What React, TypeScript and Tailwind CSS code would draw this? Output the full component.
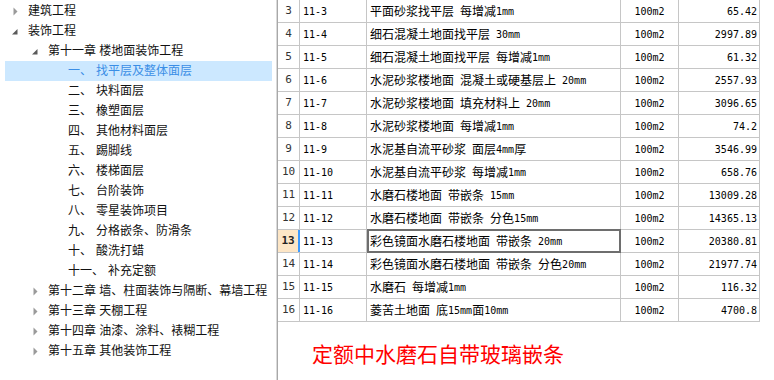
import React from 'react';

type TreeItem = {
    level: 0 | 1 | 2;
    state?: 'open' | 'closed';
    num?: string;
    label: string;
    selected?: boolean;
};

const TREE: TreeItem[] = [
    { level: 0, state: 'closed', label: '建筑工程' },
    { level: 0, state: 'open', label: '装饰工程' },
    { level: 1, state: 'open', label: '第十一章 楼地面装饰工程' },
    { level: 2, num: '一、', label: '找平层及整体面层', selected: true },
    { level: 2, num: '二、', label: '块料面层' },
    { level: 2, num: '三、', label: '橡塑面层' },
    { level: 2, num: '四、', label: '其他材料面层' },
    { level: 2, num: '五、', label: '踢脚线' },
    { level: 2, num: '六、', label: '楼梯面层' },
    { level: 2, num: '七、', label: '台阶装饰' },
    { level: 2, num: '八、', label: '零星装饰项目' },
    { level: 2, num: '九、', label: '分格嵌条、防滑条' },
    { level: 2, num: '十、', label: '酸洗打蜡' },
    { level: 2, num: '十一、', label: '补充定额' },
    { level: 1, state: 'closed', label: '第十二章 墙、柱面装饰与隔断、幕墙工程' },
    { level: 1, state: 'closed', label: '第十三章 天棚工程' },
    { level: 1, state: 'closed', label: '第十四章 油漆、涂料、裱糊工程' },
    { level: 1, state: 'closed', label: '第十五章 其他装饰工程' },
];

// row no, code, name, unit, value
const ROWS: [string, string, string, string, string][] = [
    ['3', '11-3', '平面砂浆找平层 每增减1mm', '100m2', '65.42'],
    ['4', '11-4', '细石混凝土地面找平层 30mm', '100m2', '2997.89'],
    ['5', '11-5', '细石混凝土地面找平层 每增减1mm', '100m2', '61.32'],
    ['6', '11-6', '水泥砂浆楼地面 混凝土或硬基层上 20mm', '100m2', '2557.93'],
    ['7', '11-7', '水泥砂浆楼地面 填充材料上 20mm', '100m2', '3096.65'],
    ['8', '11-8', '水泥砂浆楼地面 每增减1mm', '100m2', '74.2'],
    ['9', '11-9', '水泥基自流平砂浆 面层4mm厚', '100m2', '3546.99'],
    ['10', '11-10', '水泥基自流平砂浆 每增减1mm', '100m2', '658.76'],
    ['11', '11-11', '水磨石楼地面 带嵌条 15mm', '100m2', '13009.28'],
    ['12', '11-12', '水磨石楼地面 带嵌条 分色15mm', '100m2', '14365.13'],
    ['13', '11-13', '彩色镜面水磨石楼地面 带嵌条 20mm', '100m2', '20380.81'],
    ['14', '11-14', '彩色镜面水磨石楼地面 带嵌条 分色20mm', '100m2', '21977.74'],
    ['15', '11-15', '水磨石 每增减1mm', '100m2', '116.32'],
    ['16', '11-16', '菱苦土地面 底15mm面10mm', '100m2', '4700.8'],
];

const PAD = ['pl-[7px]', 'pl-[27px]', 'pl-[47px]'];

// Latin runs get the narrow mono face, CJK stays in Noto
function Mixed({ text }: { text: string }) {
    const parts = text.split(/([\x00-\x7f]+)/);
    return (
        <>
            {parts.map((p, i) =>
                i % 2 === 1 ? (
                    <span key={i} className="font-['DejaVu_Sans_Mono',monospace] text-[10px] whitespace-pre">
                        {p}
                    </span>
                ) : (
                    p && <span key={i}>{p}</span>
                )
            )}
        </>
    );
}

function Arrow({ state }: { state?: 'open' | 'closed' }) {
    if (state === 'closed') {
        return (
            <svg width="6" height="9" viewBox="0 0 6 9" className="ml-px">
                <path d="M0.5 0.5 L4.5 4.5 L0.5 8.5 Z" fill="#9a9a9a" />
            </svg>
        );
    }
    if (state === 'open') {
        return (
            <svg width="6" height="6" viewBox="0 0 6 6" className="mt-px">
                <path d="M5.5 0 L5.5 5.5 L0 5.5 Z" fill="#5a5a5a" />
            </svg>
        );
    }
    return null;
}

export default function App() {
    return (
        <div className="flex h-[380px] w-[774px] overflow-hidden bg-white">
            {/* Tree */}
            <div className="w-[277px] shrink-0 border-r border-[#dadada] pt-px font-['Liberation_Sans','Noto_Sans_CJK_SC',sans-serif] text-[12px] text-[#111]">
                {TREE.map((item, i) => (
                    <div
                        key={i}
                        className={`ml-[5px] flex h-5 w-[267px] items-center ${PAD[item.level]} ${
                            item.selected ? 'bg-[#cce8ff] text-[#3a8ee6]' : ''
                        }`}
                    >
                        <span className="flex w-4 shrink-0 items-center">
                            <Arrow state={item.state} />
                        </span>
                        {item.num && <span>{item.num}</span>}
                        <span className={item.num ? 'ml-1 whitespace-nowrap' : 'whitespace-nowrap'}>{item.label}</span>
                    </div>
                ))}
            </div>

            {/* Table */}
            <div className="flex flex-1 flex-col border-l border-[#a8a8a8]">
                <div className="w-[482px] font-['Noto_Sans_CJK_SC',sans-serif] text-[12px] text-black">
                    {ROWS.map(([no, code, name, unit, value]) => {
                        const active = no === '13';
                        return (
                            <div key={no} className="flex h-[23px] border-b border-[#c6c6c6]">
                                <div
                                    className={`flex w-[22px] items-center justify-center font-['DejaVu_Sans_Mono',monospace] text-[11px] ${
                                        active
                                            ? 'border-r-2 border-[#3d9bff] bg-[#fde6c6] font-bold text-[#222]'
                                            : 'border-r border-[#c6c6c6] text-[#333]'
                                    }`}
                                >
                                    {no}
                                </div>
                                <div className="flex w-[67px] items-center border-r border-[#c6c6c6] pl-[3px]">
                                    <Mixed text={code} />
                                </div>
                                <div
                                    className={`flex w-[254px] items-center whitespace-nowrap ${
                                        active ? '-mt-px h-[24px] border-2 border-[#6e6e6e] pl-px' : 'border-r border-[#c6c6c6] pl-[3px]'
                                    }`}
                                >
                                    <Mixed text={name} />
                                </div>
                                <div className="flex w-[58px] items-center justify-center border-r border-[#c6c6c6]">
                                    <Mixed text={unit} />
                                </div>
                                <div className="flex w-[81px] items-center justify-end border-r border-[#c6c6c6] pr-[2px]">
                                    <Mixed text={value} />
                                </div>
                            </div>
                        );
                    })}
                </div>

                <div className="mt-[21px] pl-[34px] font-['Noto_Sans_CJK_SC',sans-serif] text-[21px] leading-none text-[#ff0000]">
                    定额中水磨石自带玻璃嵌条
                </div>
            </div>
        </div>
    );
}
